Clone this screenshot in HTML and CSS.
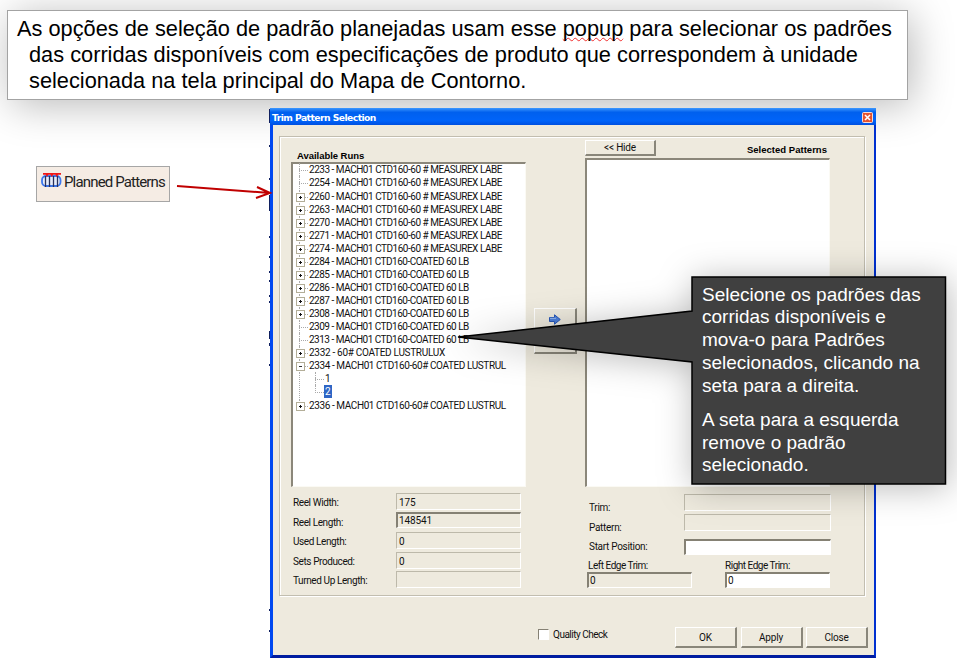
FILE: index.html
```html
<!DOCTYPE html>
<html lang="pt-BR">
<head>
<meta charset="utf-8">
<title>Trim Pattern Selection</title>
<link rel="stylesheet" href="styles.css">
</head>
<body>
<main class="slide">
  <p class="intro"><span class="l1">As opções de seleção de padrão planejadas usam esse <span class="misspelt">popup</span> para selecionar os padrões</span><br><span class="l2">das corridas disponíveis com especificações de produto que correspondem à unidade</span><br><span class="l3">selecionada na tela principal do Mapa de Contorno.</span></p>

  <div class="planned">
    <svg class="planned-icon" width="21" height="16" viewBox="0 0 21 16">
      <rect x="1" y="4" width="18.5" height="10" rx="4" fill="#e6ecfa" stroke="#3d78ee" stroke-width="1.8"/>
      <path d="M4.500 4v11M8.500 4v11M12.500 4v11M16.500 4v11" stroke="#27305c" stroke-width="1.3"/>
      <path d="M2 1h18v1.700H2zM4.200 2h3.600L6 5zM9 2h3.600l-1.800 3zM14 2h3.600l-1.800 3z" fill="#f01818"/>
    </svg>
    <span>Planned Patterns</span>
  </div>

  <section class="dialog">
    <header class="titlebar"><h1>Trim Pattern Selection</h1>
      <svg class="close" width="11" height="11" viewBox="0 0 11 11"><rect x=".5" y=".5" width="10" height="10" rx="1" fill="#e4532f" stroke="#fbdcd0"/><path d="M3 3l5 5M8 3L3 8" stroke="#fff" stroke-width="1.6"/></svg>
    </header>
    <div class="client">
      <div class="group">
        <div class="left">
          <h2>Available Runs</h2>
          <ul class="tree">
            <li class="a">2233 - MACH01 CTD160-60 # MEASUREX LABE</li>
            <li class="a">2254 - MACH01 CTD160-60 # MEASUREX LABE</li>
            <li class="plus a">2260 - MACH01 CTD160-60 # MEASUREX LABE</li>
            <li class="plus a">2263 - MACH01 CTD160-60 # MEASUREX LABE</li>
            <li class="plus a">2270 - MACH01 CTD160-60 # MEASUREX LABE</li>
            <li class="plus a">2271 - MACH01 CTD160-60 # MEASUREX LABE</li>
            <li class="plus a">2274 - MACH01 CTD160-60 # MEASUREX LABE</li>
            <li class="plus b">2284 - MACH01 CTD160-COATED 60 LB</li>
            <li class="plus b">2285 - MACH01 CTD160-COATED 60 LB</li>
            <li class="plus b">2286 - MACH01 CTD160-COATED 60 LB</li>
            <li class="plus b">2287 - MACH01 CTD160-COATED 60 LB</li>
            <li class="plus b">2308 - MACH01 CTD160-COATED 60 LB</li>
            <li class="b">2309 - MACH01 CTD160-COATED 60 LB</li>
            <li class="b">2313 - MACH01 CTD160-COATED 60 LB</li>
            <li class="plus">2332 - 60# COATED LUSTRULUX</li>
            <li class="minus c">2334 - MACH01 CTD160-60# COATED LUSTRUL</li>
            <li class="child">1</li>
            <li class="child end"><mark>2</mark></li>
            <li class="plus c last">2336 - MACH01 CTD160-60# COATED LUSTRUL</li>
          </ul>
          <div class="fields">
            <span>Reel Width:</span><output>175</output>
            <span>Reel Length:</span><output class="deep">148541</output>
            <span>Used Length:</span><output>0</output>
            <span>Sets Produced:</span><output>0</output>
            <span>Turned Up Length:</span><output></output>
          </div>
        </div>
        <div class="middle"><div class="button move"><svg width="12" height="11" viewBox="0 0 12 11"><path d="M.5 3.500h5V.8L11.300 5.500 5.500 10.200V7.500h-5z" fill="#4d80dc" stroke="#2858b8"/><path d="M1 4.300h6" stroke="#9abff5"/></svg></div></div>
        <div class="right">
          <div class="right-head"><div class="button hide">&lt;&lt; Hide</div><h2>Selected Patterns</h2></div>
          <div class="list"></div>
          <div class="fields trim">
            <span>Trim:</span><output></output>
            <span>Pattern:</span><output></output>
            <span>Start Position:</span><output class="deep white"></output>
          </div>
          <div class="edges">
            <div><span>Left Edge Trim:</span><output class="deep">0</output></div>
            <div><span>Right Edge Trim:</span><output class="deep white">0</output></div>
          </div>
        </div>
      </div>
      <footer><i class="check"></i><span class="quality">Quality Check</span><div class="button">OK</div><div class="button">Apply</div><div class="button">Close</div></footer>
    </div>
  </section>
  <svg class="edge-marks" width="1" height="540" viewBox="0 0 1 540"><path d="M.5 0v14M.5 36v2M.5 69v2M.5 86v16M.5 127v2M.5 147v2M.5 162v2M.5 171v2M.5 186v2M.5 192v2M.5 222v8M.5 234v3M.5 255v2M.5 500v2M.5 521v2" stroke="#102060"/></svg>

  <svg class="red-arrow" width="100" height="20" viewBox="0 0 100 20"><path d="M2 4L95 11M82 5l13 6-14 5" fill="none" stroke="#c00000" stroke-width="2"/></svg>
  <svg class="callout-shape" width="507" height="324" viewBox="0 0 507 324"><path d="M242 17H495.500V224H242V102L8 77 242 51z" fill="#404040" stroke="#000" stroke-width="1.500"/></svg>
  <div class="callout">
    <p>Selecione os padrões das<br>corridas disponíveis e<br>mova-o para Padrões<br>selecionados, clicando na<br>seta para a direita.</p>
    <p>A seta para a esquerda<br>remove o padrão<br>selecionado.</p>
  </div>
</main>
</body>
</html>
```
FILE: styles.css
```css
* { box-sizing: border-box; }
body { margin: 0; background: #fff; }
h1, h2, p, ul { margin: 0; padding: 0; }
.slide { position: relative; width: 957px; height: 660px; overflow: hidden; font-family: "Liberation Sans", Arial, sans-serif; }

.intro { position: absolute; left: 7px; top: 10px; width: 901px; height: 90px; padding: 5px 0 0 9px; border: 1px solid #a3a3a3; background: #fff; box-shadow: 4px 5px 42px rgba(0,0,0,.28); font-size: 21.770px; line-height: 26px; color: #000; white-space: nowrap; }
.l2, .l3 { margin-left: 12px; }
.misspelt { text-decoration: underline wavy #f03030 1px; text-underline-offset: 1px; text-decoration-skip-ink: none; }

.planned { position: absolute; left: 36px; top: 166px; width: 134px; height: 36px; display: flex; padding: 5px 0 0 4px; border: 1px solid #a6a6a6; background: #f5ece4; font: 15px/20px Roboto, sans-serif; letter-spacing: -.84px; color: #222; white-space: nowrap; }
.planned-icon { flex: none; margin-right: 2px; }

.dialog { position: absolute; left: 270px; top: 108px; width: 606px; height: 550px; display: flex; flex-direction: column; border: solid #0048f0; border-width: 0 2px 3px 3px; border-right-color: #0030d0; border-bottom-color: #001ca0; background: #eeeade; font: 10px/13px Roboto, sans-serif; color: #111; }
.titlebar { flex: none; height: 17px; margin: 0 -2px 0 -3px; padding: 1px 3px 0 2px; display: flex; align-items: center; justify-content: space-between; background: linear-gradient(#3d98ff, #0060ee 25%, #0064fa 75%, #0050e0); }
.titlebar h1 { font: bold 9.200px/15px "DejaVu Sans", sans-serif; letter-spacing: -.54px; color: #fff; white-space: nowrap; }
.client { flex: 1; padding: 11px 9px 0 6px; }
.group { height: 460px; display: grid; grid-template-columns: 235px 59px 246px; padding-left: 11px; border: 1px solid #c2beb0; box-shadow: 1px 1px #fff, inset 1px 1px #fff; }
h2 { font: bold 9.500px/12px "Liberation Sans", sans-serif; letter-spacing: -.04px; color: #000; white-space: nowrap; }
.left h2 { margin: 13px 0 0 6px; }
.tree { height: 325px; padding-left: 8px; border: 1px solid #fbfaf4; border-top: 2px solid #8b877a; border-left: 2px solid #8b877a; background: #fff; list-style: none; }
.tree li { position: relative; top: -.6px; height: 13.070px; padding-left: 8px; line-height: 13px; white-space: nowrap; letter-spacing: -.3px; }
.tree li.a { letter-spacing: -.48px; }
.tree li.b { letter-spacing: -.51px; }
.tree li.c { letter-spacing: -.41px; }
.tree li::before { content: ""; position: absolute; left: -2px; top: 0; width: 8px; height: 7px; border-left: 1px dotted #aaa; border-bottom: 1px dotted #aaa; }
.tree li::after { content: ""; position: absolute; left: -2px; top: 6px; height: 7px; border-left: 1px dotted #aaa; }
.tree li.plus::after, .tree li.minus::after { left: -5px; top: 3px; width: 7px; height: 7px; border: 1px solid #b3ae98; background: linear-gradient(#111, #111) center / 3px 1px no-repeat, linear-gradient(#111, #111) center / 1px 3px no-repeat, #fff; }
.tree li.minus::after { background: linear-gradient(#333, #333) center / 3px 1px no-repeat, #fff; }
.tree li.child { margin-left: 16px; }
.tree li.child.end::after { left: -18px; top: -13px; height: 26px; }
mark { display: inline-block; width: 8px; height: 13px; margin-left: -1px; padding-left: 1px; background: #2f66c5; color: #fff; }
.fields { display: grid; grid-template-columns: 103px 125px; grid-auto-rows: 19.600px; padding: 6px 0 0 2px; letter-spacing: -.4px; white-space: nowrap; }
.fields span { line-height: 19px; }
output { display: block; height: 17px; padding: 2px 2px 0; border: 1px solid #bdb9aa; border-right-color: #fff; border-bottom-color: #fff; line-height: 14px; letter-spacing: -.1px; }
output.deep { height: 16px; padding: 0 1px; border-width: 2px 1px 1px 2px; border-top-color: #858174; border-left-color: #858174; line-height: 13px; }
output.white { background: #fff; }
.left .deep { margin-top: -1px; }
.button { display: flex; align-items: center; justify-content: center; border: 1px solid #fff; border-right: 2px solid #89867a; border-bottom: 2px solid #89867a; letter-spacing: -.2px; }
.middle { padding: 171px 0 0 8px; }
.move { width: 43px; height: 46px; align-items: flex-start; padding-top: 5px; }
.right-head { display: flex; height: 21px; padding-top: 3px; justify-content: space-between; }
.hide { width: 71px; height: 16px; }
.right h2 { margin: 4px 4px 0 0; letter-spacing: .02px; }
.list { width: 245px; height: 329px; border: 1px solid #fbfaf4; border-top: 2px solid #8b877a; border-left: 2px solid #8b877a; background: #fff; }
.trim { grid-template-columns: 95px 147px; padding: 7px 0 0 4px; height: 71px; letter-spacing: -.3px; }
.trim span { padding-top: 4px; }
.trim .deep { margin-top: 6px; }
.edges { display: flex; gap: 33px; padding: 1px 0 0 2px; letter-spacing: -.48px; }
.edges > div { width: 105px; }
.edges span { display: block; padding-left: 1px; white-space: nowrap; }
.edges > div + div span { padding-left: 0; }
footer { display: flex; padding: 31px 0 0 259px; align-items: flex-start; }
.check { flex: none; width: 11px; height: 11px; margin: 2px 4px 0 0; border: 1px solid #858174; border-right-color: #fff; border-bottom-color: #fff; background: #fff; }
.quality { flex: none; width: 122px; padding-top: 1px; letter-spacing: -.5px; white-space: nowrap; }
footer .button { flex: none; width: 62px; height: 21px; margin-right: 3.500px; }

.edge-marks { position: absolute; left: 269px; top: 109px; }
.red-arrow { position: absolute; left: 175px; top: 182px; }
.callout-shape { position: absolute; left: 450px; top: 260px; overflow: visible; filter: drop-shadow(2px 3px 17px rgba(0,0,0,.28)); }
.callout { position: absolute; left: 702px; top: 283.500px; font-size: 19px; line-height: 22.850px; color: #fff; white-space: nowrap; }
.callout p + p { margin-top: 11px; }
```
